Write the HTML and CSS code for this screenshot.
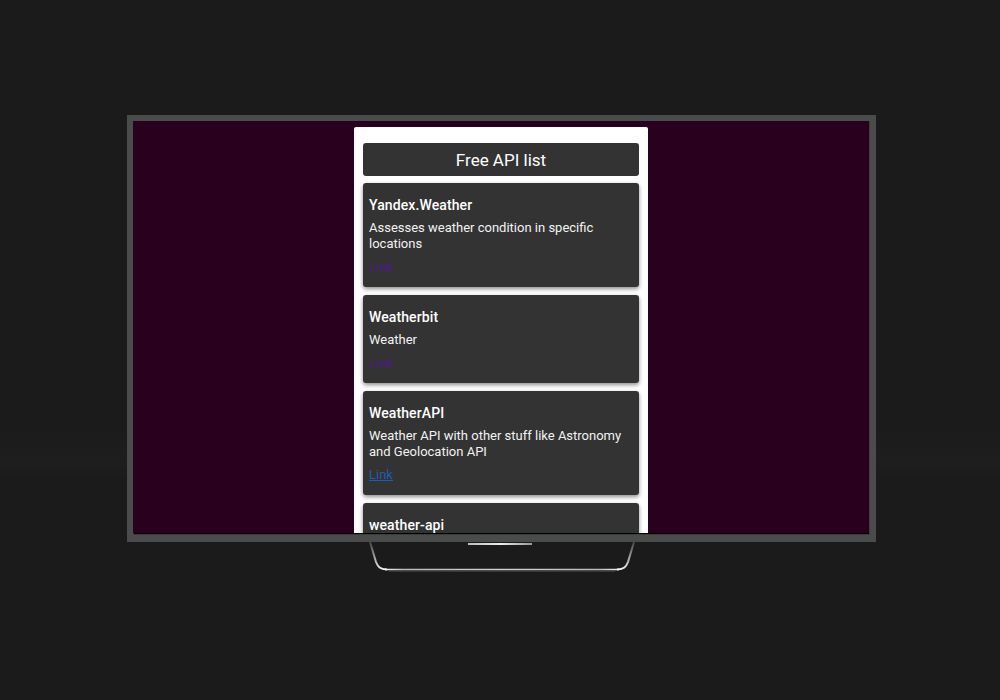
FILE: index.html
```html
<!DOCTYPE html>
<html>
<head>
<meta charset="utf-8">
<title>Free API list</title>
<link rel="stylesheet" href="styles.css">
</head>
<body>
<div class="stage">
  <div class="tv">
    <div class="screen">
      <div class="panel">
        <h1 class="header">Free API list</h1>
        <div class="card">
          <h3 class="card-title">Yandex.Weather</h3>
          <p class="card-desc">Assesses weather condition in specific locations</p>
          <a class="card-link visited" href="#">Link</a>
        </div>
        <div class="card">
          <h3 class="card-title">Weatherbit</h3>
          <p class="card-desc">Weather</p>
          <a class="card-link visited" href="#">Link</a>
        </div>
        <div class="card">
          <h3 class="card-title">WeatherAPI</h3>
          <p class="card-desc">Weather API with other stuff like Astronomy and Geolocation API</p>
          <a class="card-link" href="#">Link</a>
        </div>
        <div class="card">
          <h3 class="card-title">weather-api</h3>
          <p class="card-desc">A RESTful free API to check the weather</p>
          <a class="card-link" href="#">Link</a>
        </div>
      </div>
    </div>
  </div>
  <div class="base">
    <div class="led"></div>
    <svg class="stand" width="270" height="32" viewBox="0 0 270 32">
      <defs>
        <linearGradient id="sg" gradientUnits="userSpaceOnUse" x1="0" y1="0" x2="0" y2="28">
          <stop offset="0" stop-color="#444"/>
          <stop offset="0.6" stop-color="#aaa"/>
          <stop offset="1" stop-color="#f4f4f4"/>
        </linearGradient>
        <linearGradient id="bg" gradientUnits="userSpaceOnUse" x1="18" y1="0" x2="252" y2="0">
          <stop offset="0" stop-color="#f4f4f4"/>
          <stop offset="0.08" stop-color="#bbb"/>
          <stop offset="0.5" stop-color="#d0d0d0"/>
          <stop offset="0.92" stop-color="#bbb"/>
          <stop offset="1" stop-color="#f4f4f4"/>
        </linearGradient>
      </defs>
      <path d="M3,0 L9,20 C11,25 13,27 20,27.5" fill="none" stroke="url(#sg)" stroke-width="2"/>
      <path d="M267,0 L261,20 C259,25 257,27 250,27.5" fill="none" stroke="url(#sg)" stroke-width="2"/>
      <path d="M18,27.5 L252,27.5" stroke="url(#bg)" stroke-width="1.6"/>
      <path d="M22,29 L248,29" stroke="#555" stroke-width="1"/>
    </svg>
  </div>
</div>
</body>
</html>
```

FILE: styles.css
```css
html, body {
  margin: 0;
  padding: 0;
  background: #1b1b1b;
  font-family: Roboto, "Liberation Sans", sans-serif;
}

.stage {
  display: flex;
  flex-direction: column;
  align-items: center;
  padding-top: 115px;
  height: 700px;
  box-sizing: border-box;
  background: linear-gradient(to bottom, #1b1b1b 0, #1b1b1b 430px, #1e1e1e 460px, #1b1b1b 480px);
}

.tv {
  width: 749px;
  height: 427px;
  box-sizing: border-box;
  border: 6px solid #4a4c4c;
  border-bottom-width: 7px;
  background: #000;
  margin-left: 3px;
  box-shadow: inset 0 0 0 1px #3c3e3e;
}

.screen {
  height: 412px;
  margin-right: 1px;
  background: #2a001f;
  overflow: hidden;
  display: flex;
  justify-content: center;
  padding-top: 6px;
  box-sizing: border-box;
}

.panel {
  width: 294px;
  background: #fff;
  padding: 16px 9px 0;
  box-sizing: border-box;
  border-radius: 2px 2px 0 0;
  display: flex;
  flex-direction: column;
  gap: 8px;
}

.header {
  margin: 0 0 -1px;
  height: 33px;
  flex-shrink: 0;
  background: #333;
  color: #fff;
  border-radius: 3px;
  font-size: 17px;
  font-weight: 400;
  line-height: 34px;
  text-align: center;
}

.card {
  flex-shrink: 0;
  background: #333;
  color: #fff;
  border-radius: 3px;
  padding: 6px 6px 12px;
  box-shadow: 0 2px 4px rgba(0, 0, 0, 0.45);
  display: flex;
  flex-direction: column;
  align-items: flex-start;
}

.card-title {
  margin: 8px 0 7px;
  font-size: 14px;
  font-weight: 500;
  line-height: 16px;
  letter-spacing: 0.1px;
}

.card-desc {
  margin: 0 0 7px;
  font-size: 13px;
  line-height: 16px;
  color: #f2f2f2;
}

.card-link {
  font-size: 13px;
  line-height: 16px;
  color: #1a5fb4;
  text-decoration: underline;
}

.card-link.visited {
  color: #4b1a8b;
  text-decoration: none;
}

.base {
  position: relative;
  width: 270px;
  height: 32px;
  margin-left: 3px;
}

.led {
  position: absolute;
  left: 101px;
  top: 1px;
  width: 64px;
  height: 2px;
  background: linear-gradient(to right, #bbb, #eee 50%, #999);
}

.stand {
  display: block;
}
```
